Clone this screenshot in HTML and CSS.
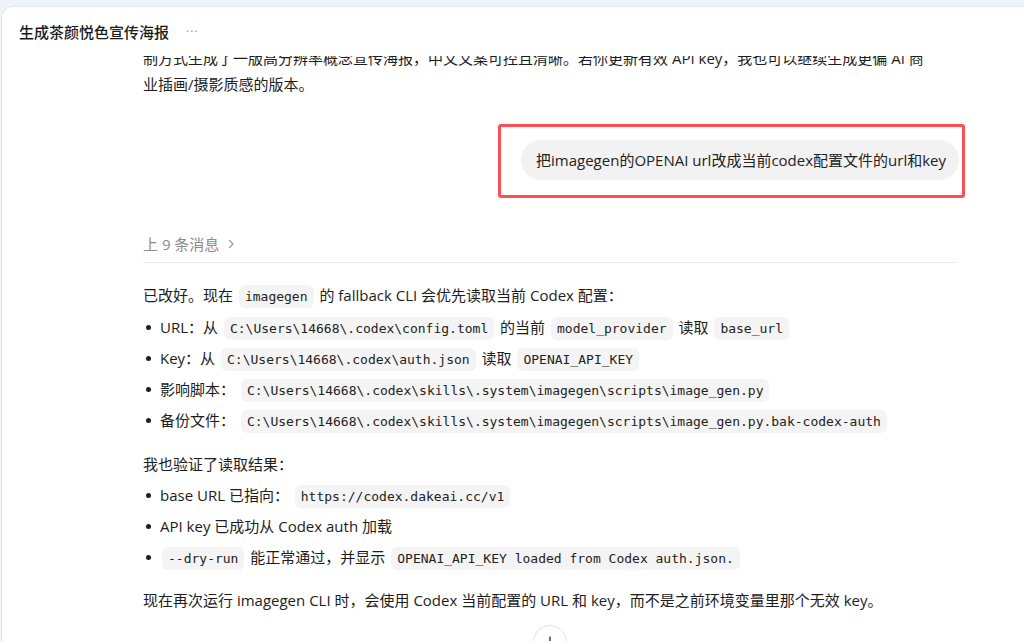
FILE: index.html
```html
<!DOCTYPE html>
<html lang="zh-CN">
<head>
<meta charset="utf-8">
<title>生成茶颜悦色宣传海报</title>
<link rel="stylesheet" href="styles.css">
</head>
<body>
<div class="app">
  <header class="topbar">
    <h1 class="title">生成茶颜悦色宣传海报</h1>
    <span class="more">···</span>
  </header>
  <main class="scroll">
    <div class="thread">
      <p class="prev"><span class="line">制方式生成了一版高分辨率概念宣传海报，中文文案可控且清晰。若你更新有效 API key，我也可以继续生成更偏 AI 商</span><br><span class="line">业插画/摄影质感的版本。</span></p>

      <div class="user-row">
        <div class="bubble">把imagegen的OPENAI url改成当前codex配置文件的url和key
          <span class="highlight"></span>
        </div>
      </div>

      <div class="earlier">上 9 条消息 <svg class="chev" width="10" height="10" viewBox="0 0 10 10"><path d="M3.5 1.5 L7 5 L3.5 8.5" fill="none" stroke="#9a9a9a" stroke-width="1.2" stroke-linecap="round" stroke-linejoin="round"/></svg></div>

      <div class="answer">
        <p>已改好。现在 <code>imagegen</code> 的 fallback CLI 会优先读取当前 Codex 配置：</p>
        <ul>
          <li>URL：从 <code>C:\Users\14668\.codex\config.toml</code> 的当前 <code>model_provider</code> 读取 <code>base_url</code></li>
          <li>Key：从 <code>C:\Users\14668\.codex\auth.json</code> 读取 <code>OPENAI_API_KEY</code></li>
          <li>影响脚本： <code>C:\Users\14668\.codex\skills\.system\imagegen\scripts\image_gen.py</code></li>
          <li>备份文件： <code>C:\Users\14668\.codex\skills\.system\imagegen\scripts\image_gen.py.bak-codex-auth</code></li>
        </ul>
        <p class="gap">我也验证了读取结果：</p>
        <ul>
          <li>base URL 已指向： <code>https://codex.dakeai.cc/v1</code></li>
          <li>API key 已成功从 Codex auth 加载</li>
          <li><code>--dry-run</code> 能正常通过，并显示 <code>OPENAI_API_KEY loaded from Codex auth.json.</code></li>
        </ul>
        <p class="gap2">现在再次运行 imagegen CLI 时，会使用 Codex 当前配置的 URL 和 key，而不是之前环境变量里那个无效 key。</p>
      </div>
    </div>
    <button class="to-bottom" aria-label="滚动到底部">
      <svg width="14" height="14" viewBox="0 0 14 14"><path d="M7 2 V11 M3.5 7.5 L7 11 L10.5 7.5" fill="none" stroke="#333" stroke-width="1.4" stroke-linecap="round" stroke-linejoin="round"/></svg>
    </button>
  </main>
</div>
</body>
</html>
```

FILE: styles.css
```css
* { box-sizing: border-box; }

html, body {
  margin: 0;
  padding: 0;
  height: 100%;
}

body {
  background: #eef2f9;
  font-family: "Open Sans", "Noto Sans CJK SC", sans-serif;
  color: #1d1d1d;
  font-size: 15px;
  overflow: hidden;
}

.app {
  margin: 6px 0 0 1px;
  height: calc(100vh - 6px);
  background: #ffffff;
  border-top: 1px solid #e2e6ee;
  border-left: 1px solid #e2e6ee;
  border-top-left-radius: 12px;
  display: flex;
  flex-direction: column;
}

.topbar {
  height: 49px;
  flex: none;
  display: flex;
  align-items: center;
  padding-left: 17px;
  background: #ffffff;
  border-top-left-radius: 12px;
  position: relative;
  z-index: 2;
}

.title {
  margin: 0;
  font-size: 15px;
  font-weight: 500;
  color: #1a1a1a;
  font-family: "Noto Sans CJK SC", sans-serif;
}

.more {
  margin-left: 17px;
  color: #9a9a9a;
  font-size: 12px;
  letter-spacing: 1px;
}

.scroll {
  flex: 1;
  overflow: hidden;
  position: relative;
}

.thread {
  margin-left: 141px;
  width: 815px;
  margin-top: -11px;
}

p { margin: 0; }

.prev {
  line-height: 26px;
}

.line { white-space: nowrap; }

.user-row {
  display: flex;
  justify-content: flex-end;
  margin-top: 43px;
}

.bubble {
  position: relative;
  background: #f2f2f2;
  border-radius: 20px;
  padding: 9px 13px 9px 15px;
  line-height: 22px;
  color: #222;
  margin-right: -1px;
}

.highlight {
  position: absolute;
  left: -23px;
  top: -16px;
  right: -6px;
  bottom: -18px;
  border: 3px solid #ff4f55;
  border-radius: 3px;
  pointer-events: none;
}

.earlier {
  margin-top: 53px;
  padding-bottom: 7px;
  border-bottom: 1px solid #ececec;
  line-height: 22px;
  color: #8c8c8c;
  display: flex;
  align-items: center;
  gap: 4px;
}

.chev { margin-left: 3px; }

.answer {
  margin-top: 20px;
}

.answer p {
  line-height: 24px;
}

ul {
  list-style: none;
  margin: 8px 0 0;
  padding: 0;
}

li {
  position: relative;
  padding-left: 17px;
  line-height: 24px;
  height: 24px;
  white-space: nowrap;
}

li + li { margin-top: 7px; }

li::before {
  content: "";
  position: absolute;
  left: 3px;
  top: 10px;
  width: 5px;
  height: 5px;
  border-radius: 50%;
  background: #1d1d1d;
}

code {
  font-family: "DejaVu Sans Mono", "Liberation Mono", monospace;
  font-size: 13px;
  line-height: 1;
  background: #f4f4f4;
  color: #222;
  border-radius: 6px;
  padding: 4px 6px;
  margin: 0 2px;
}

.answer .gap { margin-top: 20px; }
.answer .gap + ul { margin-top: 7px; }
.answer .gap2 { margin-top: 19px; }

.to-bottom {
  position: absolute;
  left: 531px;
  top: 569px;
  width: 34px;
  height: 34px;
  border-radius: 50%;
  border: 1px solid #e2e2e2;
  background: #fff;
  display: flex;
  align-items: center;
  justify-content: center;
  padding: 0;
}
```
